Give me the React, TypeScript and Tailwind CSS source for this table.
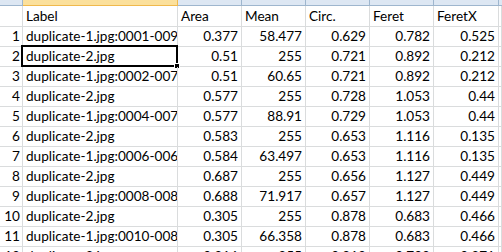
import React from 'react';

type Row = [string, string, string, string, string, string, string];

const rows: Row[] = [
  ['1', 'duplicate-1.jpg:0001-0095-0034', '0.377', '58.477', '0.629', '0.782', '0.525'],
  ['2', 'duplicate-2.jpg', '0.51', '255', '0.721', '0.892', '0.212'],
  ['3', 'duplicate-1.jpg:0002-0079-0212', '0.51', '60.65', '0.721', '0.892', '0.212'],
  ['4', 'duplicate-2.jpg', '0.577', '255', '0.728', '1.053', '0.44'],
  ['5', 'duplicate-1.jpg:0004-0073-0044', '0.577', '88.91', '0.729', '1.053', '0.44'],
  ['6', 'duplicate-2.jpg', '0.583', '255', '0.653', '1.116', '0.135'],
  ['7', 'duplicate-1.jpg:0006-0063-0013', '0.584', '63.497', '0.653', '1.116', '0.135'],
  ['8', 'duplicate-2.jpg', '0.687', '255', '0.656', '1.127', '0.449'],
  ['9', 'duplicate-1.jpg:0008-0080-0044', '0.688', '71.917', '0.657', '1.127', '0.449'],
  ['10', 'duplicate-2.jpg', '0.305', '255', '0.878', '0.683', '0.466'],
  ['11', 'duplicate-1.jpg:0010-0088-0046', '0.305', '66.358', '0.878', '0.683', '0.466'],
  ['12', 'duplicate-2.jpg', '0.316', '255', '0.812', '0.702', '0.371'],
];

const cols = 'grid grid-cols-[23px_155px_64px_64px_64px_64px_65px_1fr]';
const cell = 'border-r border-b border-[#dadcdd] overflow-hidden whitespace-nowrap leading-[19px]';

const App: React.FC = () => {
  return (
    <div className="w-[502px] h-[252px] overflow-hidden bg-white text-black text-[13.6px] font-['Lato','Liberation_Sans',sans-serif]">
      {/* column header strip */}
      <div className={`${cols} h-[6px]`}>
        <div className="bg-[#dde7f3] border-r border-b border-[#9eb6ce]" />
        <div className="bg-[#fbe09c] border-r border-b border-[#f0b94c]" />
        <div className="bg-[#dde7f3] border-r border-b border-[#9eb6ce]" />
        <div className="bg-[#dde7f3] border-r border-b border-[#9eb6ce]" />
        <div className="bg-[#dde7f3] border-r border-b border-[#9eb6ce]" />
        <div className="bg-[#dde7f3] border-r border-b border-[#9eb6ce]" />
        <div className="bg-[#dde7f3] border-r border-b border-[#9eb6ce]" />
        <div className="bg-[#dde7f3] border-b border-[#9eb6ce]" />
      </div>

      {/* title row */}
      <div className={`${cols} h-[21px]`}>
        <div className={cell} />
        <div className={`${cell} pl-[3px] pt-[1px]`}>Label</div>
        <div className={`${cell} pl-[3px] pt-[1px]`}>Area</div>
        <div className={`${cell} pl-[3px] pt-[1px]`}>Mean</div>
        <div className={`${cell} pl-[3px] pt-[1px]`}>Circ.</div>
        <div className={`${cell} pl-[3px] pt-[1px]`}>Feret</div>
        <div className={`${cell} pl-[3px] pt-[1px]`}>FeretX</div>
        <div className={`${cell} pl-[2px] pt-[1px] text-[#c65911]`}>FeretY</div>
      </div>

      {rows.map((r) => (
        <div key={r[0]} className={`${cols} h-[20px]`}>
          <div className={`${cell} text-right pr-[2px]`}>{r[0]}</div>
          <div className={`${cell} pl-[3px] relative overflow-visible`}>
            <div className="overflow-hidden">{r[1]}</div>
            {r[0] === '2' && (
              <>
                <div className="absolute -left-[2px] -top-[2px] -right-[1px] -bottom-[1px] border-2 border-black pointer-events-none" />
                <div className="absolute -right-[3px] -bottom-[3px] w-[6px] h-[6px] bg-black border border-white" />
              </>
            )}
          </div>
          <div className={`${cell} text-right pr-[3px]`}>{r[2]}</div>
          <div className={`${cell} text-right pr-[3px]`}>{r[3]}</div>
          <div className={`${cell} text-right pr-[3px]`}>{r[4]}</div>
          <div className={`${cell} text-right pr-[3px]`}>{r[5]}</div>
          <div className={`${cell} text-right pr-[3px]`}>{r[6]}</div>
          <div className={cell} />
        </div>
      ))}
    </div>
  );
};

export default App;
